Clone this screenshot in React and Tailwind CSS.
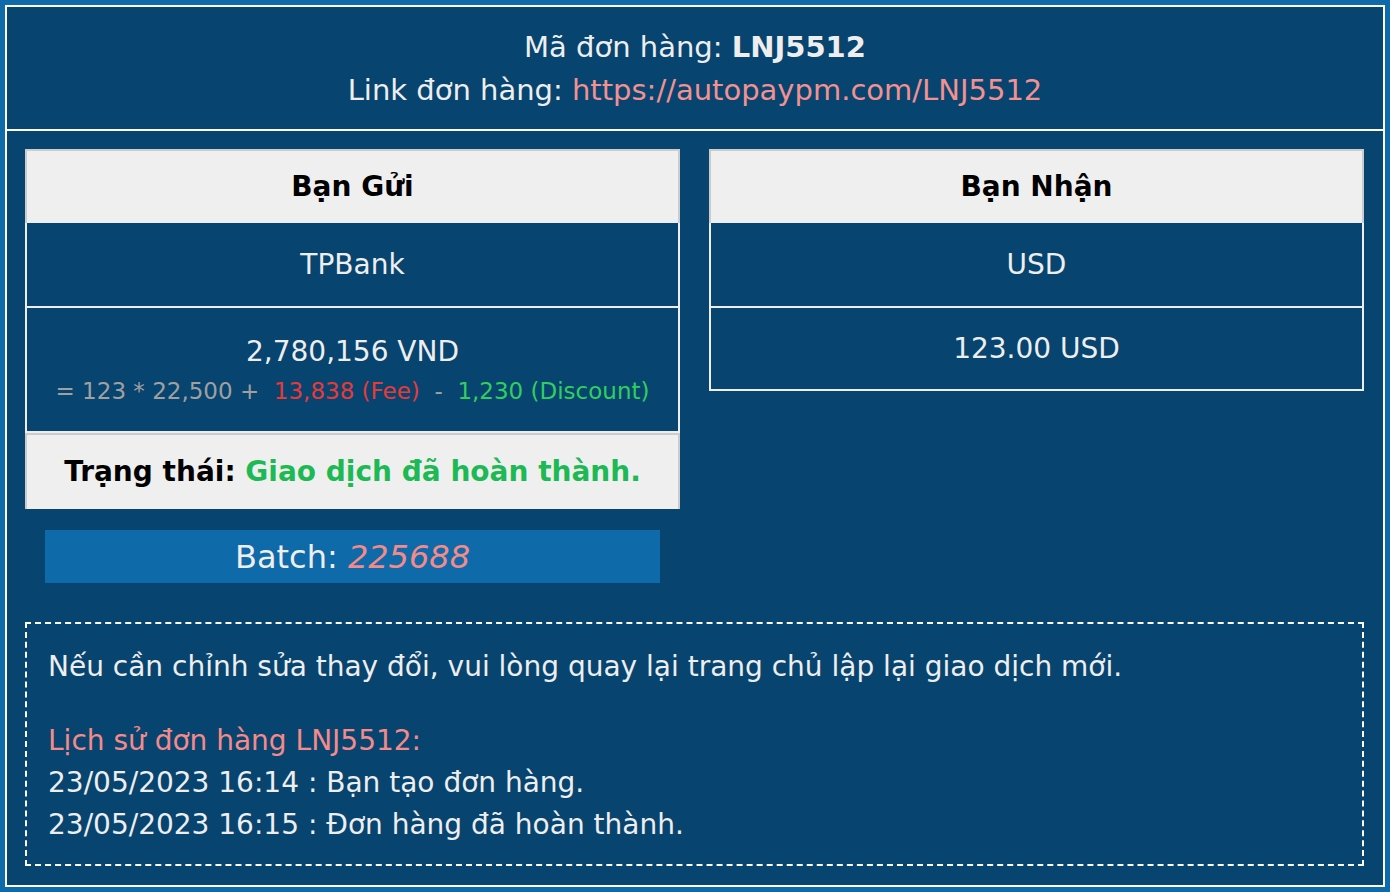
import React from 'react';

const font = { fontFamily: '"DejaVu Sans", Verdana, sans-serif' };

function SendCard() {
  return (
    <div className="flex flex-col bg-[#eeeeee]">
      <div className="h-[74px] flex items-center justify-center bg-[#efefef] border-2 border-b-0 border-[#cccccc] text-[28px] font-bold text-black">
        Bạn Gửi
      </div>
      <div className="mx-[2px] h-[83px] flex items-center justify-center bg-[#07446f] text-[28px] text-[#eeeeee]">
        TPBank
      </div>
      <div className="mx-[2px] mt-[2px] h-[123px] flex flex-col items-center justify-center bg-[#07446f]">
        <div className="text-[28px] leading-[36px] text-[#eeeeee]">2,780,156 VND</div>
        <div className="mt-[6px] text-[23px] leading-[30px] text-[#a0a0a0] whitespace-pre">
          {'= 123 * 22,500 +  '}
          <span className="text-[#e63a3a]">13,838 (Fee)</span>
          {'  -  '}
          <span className="text-[#2fcf5f]">1,230 (Discount)</span>
        </div>
      </div>
      <div className="mt-[2px] h-[76px] flex items-center justify-center bg-[#efefef] border-2 border-b-0 border-[#cccccc] text-[28px] font-bold text-black">
        Trạng thái:&nbsp;<span className="text-[#1db954]">Giao dịch đã hoàn thành.</span>
      </div>
    </div>
  );
}

function ReceiveCard() {
  return (
    <div className="self-start flex flex-col bg-[#eeeeee] pb-[2px]">
      <div className="h-[74px] flex items-center justify-center bg-[#efefef] border-2 border-b-0 border-[#cccccc] text-[28px] font-bold text-black">
        Bạn Nhận
      </div>
      <div className="mx-[2px] h-[83px] flex items-center justify-center bg-[#07446f] text-[28px] text-[#eeeeee]">
        USD
      </div>
      <div className="mx-[2px] mt-[2px] h-[81px] flex items-center justify-center bg-[#07446f] text-[28px] text-[#eeeeee]">
        123.00 USD
      </div>
    </div>
  );
}

export default function App() {
  return (
    <div className="min-h-screen bg-[#0e6aa8] p-[5px]" style={font}>
      <div className="border-2 border-white bg-[#07446f] text-[#eeeeee]">
        <div className="h-[124px] flex flex-col items-center justify-center border-b-2 border-white text-[29px] leading-[42px]">
          <div>
            Mã đơn hàng: <span className="font-bold">LNJ5512</span>
          </div>
          <div className="mt-[1px]">
            Link đơn hàng: <span className="text-[#f39191]">https://autopaypm.com/LNJ5512</span>
          </div>
        </div>
        <div className="pt-[18px] pl-[18px] pr-[19px] pb-[19px]">
          <div className="grid grid-cols-2 gap-[29px]">
            <div>
              <SendCard />
              <div className="mx-[20px] mt-[21px] h-[53px] flex items-center justify-center bg-[#0e6aa8] text-[32px] text-[#eeeeee]">
                Batch:&nbsp;<span className="italic text-[#f58a8a]">225688</span>
              </div>
            </div>
            <ReceiveCard />
          </div>
          <div className="mt-[39px] border-2 border-dashed border-white px-[21px] pt-[22px] pb-[18px] text-[28px] leading-[42px] text-[#eeeeee]">
            <div>Nếu cần chỉnh sửa thay đổi, vui lòng quay lại trang chủ lập lại giao dịch mới.</div>
            <div className="mt-[32px] text-[#f58a8a]">Lịch sử đơn hàng LNJ5512:</div>
            <div>23/05/2023 16:14 : Bạn tạo đơn hàng.</div>
            <div>23/05/2023 16:15 : Đơn hàng đã hoàn thành.</div>
          </div>
        </div>
      </div>
    </div>
  );
}
